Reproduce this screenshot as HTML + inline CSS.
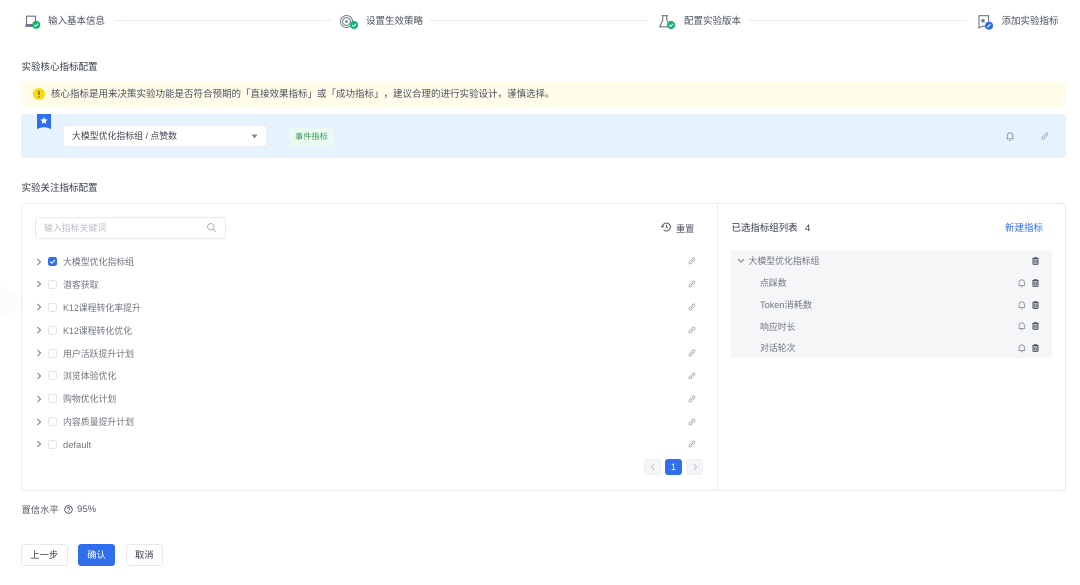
<!DOCTYPE html>
<html lang="zh">
<head>
<meta charset="utf-8">
<style>
html,body{margin:0;padding:0;background:#fff}
body{width:1080px;height:585px;position:relative;overflow:hidden;font-family:"Liberation Sans","Noto Sans CJK SC",sans-serif;font-size:8.9px;color:#4e5969;text-spacing-trim:space-all;filter:blur(.3px)}
.a{position:absolute;white-space:nowrap;line-height:12px}
.b{position:absolute;box-sizing:border-box}
svg{position:absolute;overflow:visible;fill:none}
.line{position:absolute;height:1px;background:#e9ecf3;top:20px}
.h{color:#343a46;font-size:9.5px}
.st{top:15.5px;color:#4a505c;font-size:9.5px}
.row{color:#70757f}
.cb{position:absolute;left:48px;width:9px;height:9px;box-sizing:border-box;border:1px solid #e3e5ea;border-radius:2.5px;background:#fff}
.btn{position:absolute;top:544px;height:22px;box-sizing:border-box;border:1px solid #e8e9ec;border-radius:3px;line-height:20px;text-align:center;background:#fff;color:#343a46;font-size:9.3px}
</style>
</head>
<body>
<svg width="0" height="0" style="position:absolute">
<defs>
<symbol id="chev" viewBox="0 0 6 8"><path d="M1.5 1 4.5 4 1.5 7" stroke="#7b8089" stroke-width="1.1" fill="none"/></symbol>
<symbol id="link" viewBox="0 0 10 10"><path d="M4.2 3.4 5.9 1.7a1.4 1.4 0 0 1 2.2 2.2L6.4 5.6M5.6 6.6 3.9 8.3a1.4 1.4 0 0 1-2.2-2.2L3.4 4.4M3.9 6.1 6 4" stroke="#9a9ea6" stroke-width="1" fill="none"/></symbol>
<symbol id="bell" viewBox="0 0 8 9"><path d="M1.2 6.6V3.6a2.8 2.8 0 0 1 5.6 0v3M.4 6.8h7.2M3 8.3h2M4 .2v.6" stroke="#8b9098" stroke-width=".9" fill="none"/></symbol>
<symbol id="trash" viewBox="0 0 8 9"><path d="M.3 1.5h7.4M2.5 1.2V.4h3v.8" stroke="#555a67" stroke-width=".9" fill="none"/><rect x="1.1" y="1.7" width="5.8" height="6.7" rx=".7" stroke="#555a67" stroke-width="1.1" fill="#b4b7be"/><path d="M3.1 3.6v3M4.9 3.6v3" stroke="#555a67" stroke-width=".8" fill="none"/></symbol>
</defs>
</svg>

<!-- stepper -->
<svg style="left:25px;top:15px" width="16" height="15"><path d="M1.5 1.2h9v8.4h-9z" stroke="#6d7686" stroke-width="1.1"/><rect x=".3" y="9.8" width="9" height="2.1" fill="#6d7686"/><circle cx="11.2" cy="9.8" r="4.1" fill="#12b76a"/><path d="M9.2 9.8 10.7 11.3 13.2 8.6" stroke="#fff" stroke-width="1"/></svg>
<div class="a st" style="left:48px">输入基本信息</div>
<div class="line" style="left:114px;width:217px"></div>

<svg style="left:340px;top:14.5px" width="18" height="16"><circle cx="6.5" cy="6.5" r="6" stroke="#7a8392" stroke-width="1.1"/><circle cx="6.5" cy="6.5" r="3.9" stroke="#7a8392" stroke-width="1.1"/><circle cx="6.5" cy="6.5" r="1.3" fill="#6d7686"/><circle cx="14" cy="10" r="4.1" fill="#12b76a"/><path d="M12 10 13.5 11.5 16 8.8" stroke="#fff" stroke-width="1"/></svg>
<div class="a st" style="left:366px">设置生效策略</div>
<div class="line" style="left:430px;width:218px"></div>

<svg style="left:659px;top:15px" width="16" height="15"><path d="M2.6.7h6.4M3.8.7v4.3L.7 11.8h7.8M7.8.7v4.3L8.8 7" stroke="#6d7686" stroke-width="1.1"/><circle cx="12" cy="10" r="4.1" fill="#12b76a"/><path d="M10 10 11.5 11.5 14 8.8" stroke="#fff" stroke-width="1"/></svg>
<div class="a st" style="left:684px">配置实验版本</div>
<div class="line" style="left:748px;width:218px"></div>

<svg style="left:978px;top:15px" width="16" height="15"><path d="M10.5 6.5V.7H1v12.2l3.2-1.6H7" stroke="#6d7686" stroke-width="1.1"/><path d="M5 3 5.8 4.7 7.6 4.9 6.3 6.1 6.6 7.9 5 7 3.4 7.9 3.7 6.1 2.4 4.9 4.2 4.7z" fill="#6d7686"/><circle cx="11" cy="10.7" r="4.1" fill="#2f6fed"/><path d="M9.4 12.3 12.4 9.2" stroke="#fff" stroke-width="1.1"/></svg>
<div class="a st" style="left:1001.5px">添加实验指标</div>

<!-- core section -->
<div class="a h" style="left:21.5px;top:61.5px">实验核心指标配置</div>

<div class="b" style="left:21px;top:82px;width:1045px;height:25px;background:#fffde9;border-radius:2px"></div>
<svg style="left:33px;top:88px" width="12" height="12"><circle cx="6" cy="6" r="6" fill="#fadb14"/><rect x="5.3" y="2.6" width="1.4" height="4.4" rx=".6" fill="#7d6608"/><circle cx="6" cy="8.7" r=".8" fill="#7d6608"/></svg>
<div class="a" style="left:51px;top:88.5px;color:#4a505c;font-size:9.5px">核心指标是用来决策实验功能是否符合预期的「直接效果指标」或「成功指标」，建议合理的进行实验设计，谨慎选择。</div>

<div class="b" style="left:21px;top:114px;width:1045px;height:44px;background:#e6f2fe;border-radius:3px"></div>
<svg style="left:37px;top:114px" width="14" height="16"><path d="M0 0H14V15.2Q7 11.4 0 15.2z" fill="#2f6fed"/><path d="M7 3 8.1 5.3 10.6 5.6 8.8 7.3 9.2 9.7 7 8.6 4.8 9.7 5.2 7.3 3.4 5.6 5.9 5.3z" fill="#fff"/></svg>
<div class="b" style="left:63px;top:125px;width:204px;height:22px;background:#fff;border:1px solid #e8edf3;border-radius:3px"></div>
<div class="a" style="left:72px;top:130px;color:#3f4552;font-size:8.9px">大模型优化指标组 / 点赞数</div>
<svg style="left:251px;top:134px" width="7" height="5"><path d="M.5.5h6L3.5 4.5z" fill="#80858f"/></svg>
<div class="b" style="left:289px;top:128px;width:45px;height:18px;background:#eafaf0;border-radius:3px"></div>
<div class="a" style="left:295px;top:131px;color:#3f9a5f;font-size:8.2px">事件指标</div>
<svg style="left:1006px;top:132px" width="8" height="9"><use href="#bell"/></svg>
<svg style="left:1041px;top:132px" width="8" height="8"><use href="#link"/></svg>

<!-- focus section -->
<div class="a h" style="left:21.5px;top:182.5px">实验关注指标配置</div>
<div class="b" style="left:0;top:287px;width:18px;height:30px;background:#fcfcfc;border-radius:0 15px 15px 0"></div>

<div class="b" style="left:21px;top:203px;width:1045px;height:288px;border:1px solid #ebecef;border-radius:4px;background:#fff"></div>
<div class="b" style="left:717px;top:204px;width:1px;height:286px;background:#ebecef"></div>

<div class="b" style="left:35px;top:217px;width:191px;height:22px;border:1px solid #e8eaee;border-radius:3px"></div>
<div class="a" style="left:44px;top:222px;color:#b9bdc5">输入指标关键词</div>
<svg style="left:207px;top:223px" width="9" height="9"><circle cx="3.8" cy="3.8" r="3.2" stroke="#a6aab2" stroke-width=".9"/><path d="M6 6 8.6 8.6" stroke="#a6aab2" stroke-width=".9"/></svg>

<svg style="left:661px;top:222px" width="11" height="10"><path d="M1.4 5a4 4 0 1 1 1.3 3M.3 3.8 1.4 5.1 2.7 4M5.4 2.8v2.4l1.6 1" stroke="#4a4f5c" stroke-width=".9"/></svg>
<div class="a" style="left:676px;top:222.5px;color:#4a505c;font-size:9.2px">重置</div>

<!-- left list -->
<svg style="left:36px;top:257.5px" width="6" height="8"><use href="#chev"/></svg>
<div class="cb" style="top:257px;background:#2f6fed;border-color:#2f6fed"></div>
<svg style="left:48px;top:257px" width="9" height="9"><path d="M2.2 4.6 3.9 6.2 6.9 3" stroke="#fff" stroke-width="1"/></svg>
<div class="a row" style="left:63px;top:256px">大模型优化指标组</div>
<svg style="left:688px;top:257px" width="8" height="8"><use href="#link"/></svg>

<svg style="left:36px;top:280px" width="6" height="8"><use href="#chev"/></svg>
<div class="cb" style="top:280px"></div>
<div class="a row" style="left:63px;top:279px">潜客获取</div>
<svg style="left:688px;top:280px" width="8" height="8"><use href="#link"/></svg>

<svg style="left:36px;top:303px" width="6" height="8"><use href="#chev"/></svg>
<div class="cb" style="top:303px"></div>
<div class="a row" style="left:63px;top:302px">K12课程转化率提升</div>
<svg style="left:688px;top:303px" width="8" height="8"><use href="#link"/></svg>

<svg style="left:36px;top:326px" width="6" height="8"><use href="#chev"/></svg>
<div class="cb" style="top:325.5px"></div>
<div class="a row" style="left:63px;top:324.5px">K12课程转化优化</div>
<svg style="left:688px;top:326px" width="8" height="8"><use href="#link"/></svg>

<svg style="left:36px;top:349px" width="6" height="8"><use href="#chev"/></svg>
<div class="cb" style="top:348.5px"></div>
<div class="a row" style="left:63px;top:347.5px">用户活跃提升计划</div>
<svg style="left:688px;top:349px" width="8" height="8"><use href="#link"/></svg>

<svg style="left:36px;top:371.5px" width="6" height="8"><use href="#chev"/></svg>
<div class="cb" style="top:371px"></div>
<div class="a row" style="left:63px;top:370px">浏览体验优化</div>
<svg style="left:688px;top:372px" width="8" height="8"><use href="#link"/></svg>

<svg style="left:36px;top:394.5px" width="6" height="8"><use href="#chev"/></svg>
<div class="cb" style="top:394px"></div>
<div class="a row" style="left:63px;top:393px">购物优化计划</div>
<svg style="left:688px;top:394.5px" width="8" height="8"><use href="#link"/></svg>

<svg style="left:36px;top:417.5px" width="6" height="8"><use href="#chev"/></svg>
<div class="cb" style="top:417px"></div>
<div class="a row" style="left:63px;top:416px">内容质量提升计划</div>
<svg style="left:688px;top:417.5px" width="8" height="8"><use href="#link"/></svg>

<svg style="left:36px;top:440px" width="6" height="8"><use href="#chev"/></svg>
<div class="cb" style="top:439.5px"></div>
<div class="a row" style="left:63px;top:439px;font-size:9.4px">default</div>
<svg style="left:688px;top:440px" width="8" height="8"><use href="#link"/></svg>

<!-- pagination -->
<div class="b" style="left:644px;top:459px;width:17px;height:16px;background:#f4f5f7;border:1px solid #eceef1;border-radius:3px"></div>
<svg style="left:650px;top:463px" width="6" height="8"><path d="M4 1 1.5 4 4 7" stroke="#b7bbc2" stroke-width=".9"/></svg>
<div class="b" style="left:665px;top:459px;width:17px;height:16px;background:#2f6fed;border-radius:3px;color:#fff;text-align:center;line-height:16px;font-size:9px">1</div>
<div class="b" style="left:686px;top:459px;width:17px;height:16px;background:#f4f5f7;border:1px solid #eceef1;border-radius:3px"></div>
<svg style="left:692px;top:463px" width="6" height="8"><path d="M2 1 4.5 4 2 7" stroke="#b7bbc2" stroke-width=".9"/></svg>

<!-- right -->
<div class="a" style="left:731.5px;top:223px;color:#343a46;font-size:9.45px">已选指标组列表</div>
<div class="a" style="left:805px;top:223px;color:#343a46;font-size:9.5px">4</div>
<div class="a" style="left:1005px;top:223px;color:#2f6fed;font-size:9.5px">新建指标</div>

<div class="b" style="left:731px;top:250px;width:321px;height:108px;background:#f5f6f8"></div>
<svg style="left:737px;top:258px" width="8" height="6"><path d="M1 1 4 4 7 1" stroke="#7b8089" stroke-width="1"/></svg>
<div class="a row" style="left:748.5px;top:255px">大模型优化指标组</div>
<svg style="left:1032px;top:257px" width="7" height="8"><use href="#trash"/></svg>

<div class="a row" style="left:760px;top:277px">点踩数</div>
<svg style="left:1017.5px;top:279px" width="7.5" height="8.5"><use href="#bell"/></svg>
<svg style="left:1032px;top:279px" width="7" height="8"><use href="#trash"/></svg>

<div class="a row" style="left:760px;top:299px;font-size:9.2px">Token消耗数</div>
<svg style="left:1017.5px;top:300.5px" width="7.5" height="8.5"><use href="#bell"/></svg>
<svg style="left:1032px;top:300.5px" width="7" height="8"><use href="#trash"/></svg>

<div class="a row" style="left:760px;top:320.5px">响应时长</div>
<svg style="left:1017.5px;top:322px" width="7.5" height="8.5"><use href="#bell"/></svg>
<svg style="left:1032px;top:322px" width="7" height="8"><use href="#trash"/></svg>

<div class="a row" style="left:760px;top:342px">对话轮次</div>
<svg style="left:1017.5px;top:344px" width="7.5" height="8.5"><use href="#bell"/></svg>
<svg style="left:1032px;top:344px" width="7" height="8"><use href="#trash"/></svg>

<!-- footer -->
<div class="a" style="left:21.5px;top:504px;color:#555b66;font-size:9.3px">置信水平</div>
<svg style="left:63.5px;top:504.5px" width="9" height="9"><circle cx="4.5" cy="4.5" r="3.8" stroke="#4a505c" stroke-width=".9"/><path d="M3.2 3.6a1.3 1.3 0 1 1 1.7 1.3L4.5 5.6" stroke="#4a505c" stroke-width=".8"/><circle cx="4.5" cy="6.8" r=".5" fill="#4a505c"/></svg>
<div class="a" style="left:77px;top:504px;color:#555b66;font-size:9.6px">95%</div>

<div class="btn" style="left:21px;width:46.5px">上一步</div>
<div class="btn" style="left:78px;width:37px;background:#2f6fed;border-color:#2f6fed;color:#fff">确认</div>
<div class="btn" style="left:126px;width:36.5px">取消</div>
</body>
</html>
